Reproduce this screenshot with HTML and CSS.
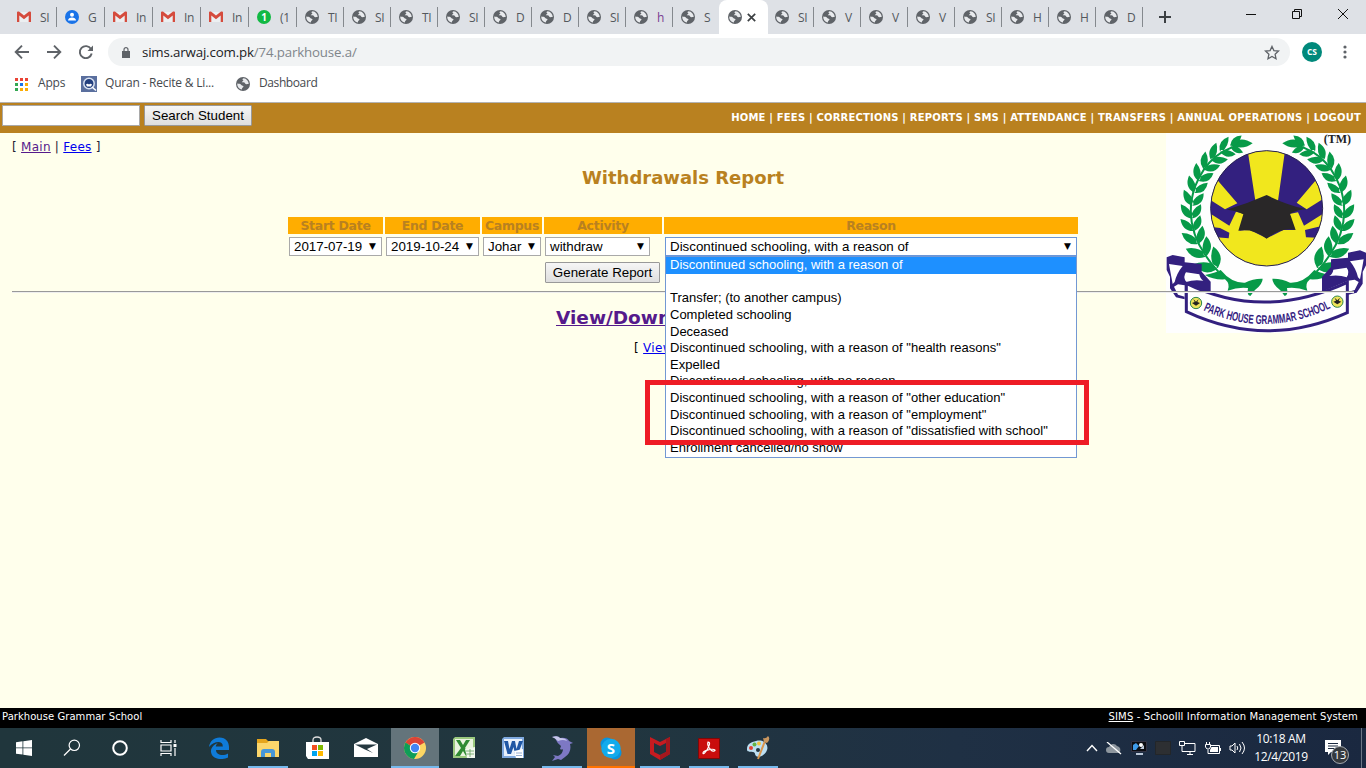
FILE: index.html
```html
<!DOCTYPE html>
<html lang="en">
<head>
<meta charset="utf-8">
<title>Withdrawals Report</title>
<link rel="stylesheet" href="styles.css">
</head>
<body>
<svg class="defs" width="0" height="0" aria-hidden="true">
  <symbol id="globe" viewBox="0 0 14 14"><circle cx="7" cy="7" r="7" fill="#5f6368"/><path d="M7.6 1.2c-1.6.5-1.2 1.7-.2 2 .2 1-1.6 1-1.6 2 1.300 0 2.900-.2 3.300 1.200.7 1.200 1.900.6 3.600.6a5.800 5.800 0 0 0-5.100-5.800zM1.300 6.500c1.500.2 3.400.3 4 1.500.7 1.200 2.300.5 2.200 1.700-.5.8-1.700 1-1.600 2.900C3 12 1 9.500 1.300 6.500z" fill="#e8eaed"/></symbol>
  <symbol id="gmail" viewBox="0 0 14 12"><path d="M1 1h12v10H1z" fill="#eceff1"/><path d="M0 1.500V11h2.300V4.500L7 8.300l4.700-3.800V11H14V1.500C14 .3 12.500.1 11.700.8L7 4.600 2.300.8C1.500.1 0 .3 0 1.500z" fill="#d54b3d"/></symbol>
  <symbol id="sprig" viewBox="-30 -30 60 50" overflow="visible"><path d="M-3 16Q-34 8-31-28Q-3-17 3 12ZM3 16Q34 8 29-25Q3-14-3 12Z" fill="#079a48"/></symbol>
</svg>

<div class="tabstrip">
  <div class="tab first"><svg class="fav gm"><use href="#gmail"/></svg><span>SI</span></div>
  <div class="tab w48"><svg class="fav" viewBox="0 0 14 14"><circle cx="7" cy="7" r="7" fill="#1a73e8"/><circle cx="7" cy="4.800" r="2" fill="#fff"/><path d="M3 10.500c0-4 8-4 8 0z" fill="#fff"/></svg><span>G</span></div>
  <div class="tab w48"><svg class="fav gm"><use href="#gmail"/></svg><span>In</span></div>
  <div class="tab w48"><svg class="fav gm"><use href="#gmail"/></svg><span>In</span></div>
  <div class="tab w48"><svg class="fav gm"><use href="#gmail"/></svg><span>In</span></div>
  <div class="tab w48"><i class="wa">1</i><span>(1</span></div>
  <div class="tab"><svg class="fav"><use href="#globe"/></svg><span>TI</span></div>
  <div class="tab"><svg class="fav"><use href="#globe"/></svg><span>SI</span></div>
  <div class="tab"><svg class="fav"><use href="#globe"/></svg><span>TI</span></div>
  <div class="tab"><svg class="fav"><use href="#globe"/></svg><span>SI</span></div>
  <div class="tab"><svg class="fav"><use href="#globe"/></svg><span>D</span></div>
  <div class="tab"><svg class="fav"><use href="#globe"/></svg><span>D</span></div>
  <div class="tab"><svg class="fav"><use href="#globe"/></svg><span>SI</span></div>
  <div class="tab"><svg class="fav"><use href="#globe"/></svg><span class="visited">h</span></div>
  <div class="tab nosep"><svg class="fav"><use href="#globe"/></svg><span>S</span></div>
  <div class="tab active"><svg class="fav"><use href="#globe"/></svg><svg class="close" viewBox="0 0 9 9"><path d="M.8.8l7.400 7.400M8.200.8L.8 8.200" stroke="#3c4043" stroke-width="1.700"/></svg></div>
  <div class="tab"><svg class="fav"><use href="#globe"/></svg><span>SI</span></div>
  <div class="tab"><svg class="fav"><use href="#globe"/></svg><span>V</span></div>
  <div class="tab"><svg class="fav"><use href="#globe"/></svg><span>V</span></div>
  <div class="tab"><svg class="fav"><use href="#globe"/></svg><span>V</span></div>
  <div class="tab"><svg class="fav"><use href="#globe"/></svg><span>SI</span></div>
  <div class="tab"><svg class="fav"><use href="#globe"/></svg><span>H</span></div>
  <div class="tab"><svg class="fav"><use href="#globe"/></svg><span>H</span></div>
  <div class="tab"><svg class="fav"><use href="#globe"/></svg><span>D</span></div>
  <svg class="newtab" viewBox="0 0 12 12"><path d="M6 0v12M0 6h12" stroke="#3c4043" stroke-width="2"/></svg>
  <svg class="winctl" width="105" height="14" viewBox="0 0 105 14" fill="none" stroke="#111"><path d="M0 7.500h10"/><path d="M46.500 4.500h7v7h-7zM48.500 4v-1.500h7v7H54"/><path d="M92 2l10 10M102 2L92 12"/></svg>
</div>

<div class="toolbar">
  <svg class="nav" width="94" height="20" viewBox="0 0 94 20" fill="none" stroke="#5f6368" stroke-width="1.900"><path d="M29 10H16M22 3.700L15.700 10l6.300 6.300"/><path d="M47 10h13M54 3.700l6.300 6.300-6.300 6.300"/><path d="M91 7A6 6 0 1 0 91.700 11.500"/><path d="M93 3.500v5.500h-5.500z" fill="#5f6368" stroke="none"/></svg>
  <div class="omnibox">
    <svg width="8" height="11" viewBox="0 0 8 11"><path d="M0 4h8v7H0z" fill="#5f6368"/><path d="M2 4.500V2.700a2 2 0 0 1 4 0v1.800" fill="none" stroke="#5f6368" stroke-width="1.200"/></svg>
    <span class="url">sims.arwaj.com.pk<em>/74.parkhouse.a/</em></span>
    <svg class="star" width="16" height="15" viewBox="0 0 16 15"><path d="M8 1.400l1.900 4.200 4.600.5-3.400 3.100.9 4.500L8 11.400l-4 2.300.9-4.500L1.500 6.100l4.600-.5z" fill="none" stroke="#5f6368" stroke-width="1.300"/></svg>
  </div>
  <b class="avatar">CS</b>
  <svg width="4" height="14" viewBox="0 0 4 14" fill="#5f6368"><circle cx="2" cy="2" r="1.600"/><circle cx="2" cy="7" r="1.600"/><circle cx="2" cy="12" r="1.600"/></svg>
</div>

<div class="bookmarks">
  <svg width="13" height="13" viewBox="0 0 13 13"><path d="M0 0h3v3H0zM5 0h3v3H5zM10 0h3v3h-3z" fill="#ea4335"/><path d="M0 5h3v3H0zM0 10h3v3H0z" fill="#34a853"/><path d="M5 5h3v3H5z" fill="#1a73e8"/><path d="M5 10h3v3H5zM10 10h3v3h-3z" fill="#fbac04"/><path d="M10 5h3v3h-3z" fill="#fbac04"/></svg>
  <span class="bm-apps">Apps</span>
  <svg width="16" height="16" viewBox="0 0 16 16"><path d="M0 0h16v16H0z" fill="#5a6f9e"/><circle cx="8" cy="7.500" r="5.200" fill="#24407e" stroke="#d9e2f1" stroke-width="1.500"/><path d="M5 8.500q1.500-1.500 3 0 1.500-1.500 3 0l-1 2H6z" fill="#fff"/><path d="M11 11l4 3.500" stroke="#fff" stroke-width="1.500"/></svg>
  <span class="bm-quran">Quran - Recite &amp; Li...</span>
  <svg class="fav"><use href="#globe"/></svg>
  <span class="bm-dash">Dashboard</span>
</div>

<header class="menu">
  <input type="text" class="search"><button class="btn search-btn">Search Student</button>
  <nav>HOME | FEES | CORRECTIONS | REPORTS | SMS | ATTENDANCE | TRANSFERS | ANNUAL OPERATIONS | LOGOUT</nav>
</header>

<main>
  <svg class="logo" viewBox="48 9 600 600">
    <defs><clipPath id="disc"><ellipse cx="350" cy="235" rx="168" ry="173"/></clipPath>
    <path id="motto" d="M160 541Q350 628 548 531"/>
    <g id="branch">
      <path d="M290 42Q180 55 135 170Q90 300 205 425" fill="none" stroke="#079a48" stroke-width="6"/>
      <path d="M308 40Q270 14 240 46Q280 62 308 40Z" fill="#079a48"/>
      <g>
        <use href="#sprig" x="-30" y="-30" width="60" height="50" transform="translate(255 46) rotate(82) scale(.85)"/>
        <use href="#sprig" x="-30" y="-30" width="60" height="50" transform="translate(224 58) rotate(65) scale(.95)"/>
        <use href="#sprig" x="-30" y="-30" width="60" height="50" transform="translate(196 80) rotate(52)"/>
        <use href="#sprig" x="-30" y="-30" width="60" height="50" transform="translate(172 106) rotate(40)"/>
        <use href="#sprig" x="-30" y="-30" width="60" height="50" transform="translate(153 138) rotate(28)"/>
        <use href="#sprig" x="-30" y="-30" width="60" height="50" transform="translate(138 173) rotate(18)"/>
        <use href="#sprig" x="-30" y="-30" width="60" height="50" transform="translate(129 211) rotate(7)"/>
        <use href="#sprig" x="-30" y="-30" width="60" height="50" transform="translate(125 249) rotate(-3)"/>
        <use href="#sprig" x="-30" y="-30" width="60" height="50" transform="translate(128 287) rotate(-13)"/>
        <use href="#sprig" x="-30" y="-30" width="60" height="50" transform="translate(138 325) rotate(-22) scale(1.100)"/>
        <use href="#sprig" x="-30" y="-30" width="60" height="50" transform="translate(157 363) rotate(-34) scale(1.200)"/>
        <use href="#sprig" x="-30" y="-30" width="60" height="50" transform="translate(186 401) rotate(-45) scale(1.350)"/>
      </g>
      <path d="M165 435Q200 428 212 420Q245 460 285 458Q310 445 338 446Q338 462 315 480L301 498Q290 495 294 474Q265 470 233 482Q242 462 225 448Q190 450 165 435Z" fill="#079a48"/>
    </g>
    <g id="fold">
      <path d="M50 382L68 375L104 382V397L155 402V425L182 455V499L104 466V508L78 502L60 475V440L50 420Z" fill="#33207f"/>
      <path d="M57 402L98 408Q80 430 74 456L68 462L62 430Z" fill="#fff"/>
      <path d="M108 427L148 433Q150 446 160 452Q130 448 108 456Q98 440 108 427ZM72 470L84 463L104 466V500L84 494Z" fill="#fff"/>
    </g></defs>
    <path d="M48 9h600v600H48z" fill="#fefefe"/>
    <use href="#branch"/><use href="#branch" transform="translate(705 0) scale(-1 1)"/>
    <use href="#fold"/><use href="#fold" transform="translate(698 -14) scale(-1 1)"/>
    <g clip-path="url(#disc)">
      <path d="M180 60h340v350H180z" fill="#33207f"/>
      <path d="M292 55H406L384 212H316ZM202 150L262 220L225 238L176 207ZM498 150L440 218L470 238L524 204Z" fill="#f1e71d"/>
      <path d="M184 253L238 287L258 245L284 252L268 302L300 300L350 325L400 300L435 300L418 252L444 247L462 287L518 252V287L465 300L468 322L520 324V415H180V320L236 325L238 308L210 294L180 290Z" fill="#f1e71d"/>
    </g>
    <ellipse cx="350" cy="235" rx="168" ry="173" fill="none" stroke="#282350" stroke-width="3"/>
    <path d="M230 239Q290 222 350 195Q410 225 470 238Q445 238 420 251L437 300Q395 290 350 326Q305 293 265 302L280 253Q255 240 230 239Z" fill="#292728"/>
    <path d="M109 460Q340 574 592 457V548Q350 658 109 545Z" fill="#fff" stroke="#33207f" stroke-width="9"/>
    <g stroke="#2c854c" stroke-width="3"><circle cx="138" cy="519" r="17" fill="#eee45b"/><circle cx="562" cy="515" r="17" fill="#eee45b"/></g>
    <path d="M130 507l4 9-8 3 12 8 12-8-8-3 4-9-8 8zM554 503l4 9-8 3 12 8 12-8-8-3 4-9-8 8z" fill="#222"/>
    <text class="motto"><textPath href="#motto" textLength="396" lengthAdjust="spacingAndGlyphs">PARK HOUSE GRAMMAR SCHOOL</textPath></text>
    <text class="tm" x="521" y="39" textLength="82" lengthAdjust="spacingAndGlyphs">(TM)</text>
  </svg>

  <div class="crumbs">[ <a class="seen">Main</a> | <a>Fees</a> ]</div>
  <h1>Withdrawals Report</h1>

  <div class="form">
    <b>Start Date</b><b>End Date</b><b>Campus</b><b>Activity</b><b>Reason</b>
    <div class="cell"><div class="select s93">2017-07-19<i>▼</i></div></div>
    <div class="cell"><div class="select s93">2019-10-24<i>▼</i></div></div>
    <div class="cell"><div class="select s58">Johar<i>▼</i></div></div>
    <div class="cell"><div class="select s105">withdraw<i>▼</i></div></div>
    <div class="cell"><div class="select open">Discontinued schooling, with a reason of<i>▼</i>
      <ul class="options">
        <li class="on">Discontinued schooling, with a reason of</li>
        <li>&nbsp;</li>
        <li>Transfer; (to another campus)</li>
        <li>Completed schooling</li>
        <li>Deceased</li>
        <li>Discontinued schooling, with a reason of "health reasons"</li>
        <li>Expelled</li>
        <li>Discontinued schooling, with no reason</li>
        <li>Discontinued schooling, with a reason of "other education"</li>
        <li>Discontinued schooling, with a reason of "employment"</li>
        <li>Discontinued schooling, with a reason of "dissatisfied with school"</li>
        <li>Enrollment cancelled/no show</li>
      </ul>
      <div class="highlight"></div>
    </div></div>
    <button class="btn generate">Generate Report</button>
  </div>
  <hr>
  <h2><a>View/Down</a></h2>
  <div class="viewlink">[ <a>View</a></div>
</main>

<footer><span>Parkhouse Grammar School</span><span class="sys"><u>SIMS</u> - Schoolll Information Management System</span></footer>

<div class="taskbar">
  <div class="task sys-task"><svg width="16" height="16" viewBox="0 0 16 16" fill="#fff"><path d="M0 2.200l6.500-.9v6.200H0zM7.300 1.200L16 0v7.500H7.300zM0 8.300h6.500v6.300L0 13.700zM7.300 8.300H16V16l-8.700-1.200z"/></svg></div>
  <div class="task sys-task"><svg width="18" height="18" viewBox="0 0 18 18" fill="none" stroke="#fff" stroke-width="1.200"><circle cx="11.300" cy="6.300" r="5.200"/><path d="M7.500 10L1 16.500"/></svg></div>
  <div class="task sys-task"><svg width="16" height="16" viewBox="0 0 16 16"><circle cx="8" cy="8" r="6.800" fill="none" stroke="#fff" stroke-width="2"/></svg></div>
  <div class="task sys-task"><svg width="17" height="16" viewBox="0 0 17 16" fill="none" stroke="#fff" stroke-width="1.200"><path d="M1 0v2.500h10V0M1 16v-2.500h10V16M1 5h10v6H1zM15 0v3M15 8v8"/><path d="M13.500 4h3v3h-3z" fill="#fff" stroke="none"/></svg></div>
  <div class="task gap"><svg width="22" height="22" viewBox="0 0 22 22"><path d="M1 10C2 4 6 .5 11.500.5 18 .5 21 5 21 10v3H8c0 5 7 6.500 12 3.500v4C14 23.500 4 22.500 3 15 2.500 10 7 7 10 6 8 7.500 7.800 9 7.800 9.500h7C15 3 6 4 1 10z" fill="#0f7bd9"/></svg></div>
  <div class="task run"><svg width="22" height="20" viewBox="0 0 22 20"><path d="M0 1h9l2 2h11v16H0z" fill="#e5a51c"/><path d="M0 5h10l2-2h10v16H0z" fill="#fbd66b"/><path d="M4 19v-5q0-3 3-3h8q3 0 3 3v5h-4v-4H8v4z" fill="#4797d8"/></svg></div>
  <div class="task"><svg width="24" height="24" viewBox="0 0 24 24"><path d="M8 7V4q0-3 4-3t4 3v3" fill="none" stroke="#ddd" stroke-width="1.300"/><path d="M1 6h23v17H3L1 20z" fill="#fff"/><path d="M7 9h5v5H7z" fill="#f25022"/><path d="M13 9h5v5h-5z" fill="#7fba00"/><path d="M7 15h5v5H7z" fill="#00a4ef"/><path d="M13 15h5v5h-5z" fill="#ffb900"/></svg></div>
  <div class="task"><svg width="24" height="20" viewBox="0 0 24 20"><path d="M0 6l12-6 12 6v13H0z" fill="#fff"/><path d="M1 6.500h22L13 11l6 4-8-3.500z" fill="#253840"/></svg></div>
  <div class="task run current"><svg width="22" height="22" viewBox="0 0 22 22"><circle cx="11" cy="11" r="11" fill="#fdd663"/><path d="M11 11L1.500 5.500A11 11 0 0 1 20.500 5.500z" fill="#db4437"/><path d="M20.500 5.500H11v5.500L1.500 5.500 6 3l5-3z" fill="#db4437"/><path d="M1.500 5.500A11 11 0 0 0 10 22l5-8.500-4-2z" fill="#0f9d58"/><circle cx="11" cy="11" r="5.200" fill="#fff"/><circle cx="11" cy="11" r="4.200" fill="#4285f4"/></svg></div>
  <div class="task"><svg width="22" height="22" viewBox="0 0 22 22"><path d="M2 0h20v21H0V2z" fill="#9bc97e"/><path d="M2 2h18v17H2z" fill="#e9f4df"/><path d="M3 3h4l3 5 3-5h4l-5 8 6 8h-5l-3-5-3 5H2l6-8z" fill="#2f8b32"/><path d="M12 12l10-2v11H14z" fill="#f2f8ee"/><path d="M13 14h8M13 17h8M17 12v8" stroke="#68a361" stroke-width=".8"/></svg></div>
  <div class="task"><svg width="22" height="22" viewBox="0 0 22 22"><path d="M2 0h20v21H0V2z" fill="#7fa9df"/><path d="M2 2h18v17H2z" fill="#e8f1fc"/><path d="M2 4h4l1.500 8L10 4h3l1.500 8L17 4h4l-5 13h-3l-1.500-7L9 17H5.500z" fill="#1f57a5"/><path d="M12 14l9-2v9h-7z" fill="#fff"/><path d="M14 16h6M14 18.500h6" stroke="#7c9bc8" stroke-width=".8"/></svg></div>
  <div class="task run"><svg width="22" height="25" viewBox="0 0 22 25"><path d="M1 1q6-2 8 1 7-1 9 3l4 2-3 1q2 8-5 13l-4 3-3-1-6 2 3-4-2-2 5 1q5-2 5-7-1 1-3 0l1-3q-4-3-5-6Q4 1 1 1z" fill="#7d78c4"/><path d="M1 1q6-2 8 1 6 0 7 3-4-2-9 0Q4 2 1 1z" fill="#c7c7ea"/></svg></div>
  <div class="task run skype"><svg width="22" height="23" viewBox="0 0 22 23"><circle cx="7" cy="7" r="6.500" fill="#0a93dc"/><circle cx="15" cy="16" r="6.500" fill="#0a93dc"/><circle cx="11" cy="11.500" r="9.700" fill="#12abec"/><text x="11" y="17" text-anchor="middle" class="skype-s">S</text></svg></div>
  <div class="task run"><svg width="22" height="24" viewBox="0 0 22 24"><path d="M1 1l10 5 10-5v17l-10 6-10-6z" fill="#c71b20"/><path d="M5 7l6 3 6-3v9l-6 3-6-3z" fill="#23343f"/><path d="M17 3l4-2v17l-10 6v-5l6-3z" fill="#a6171d"/></svg></div>
  <div class="task run"><svg width="22" height="21" viewBox="0 0 22 21"><path d="M.5.500h21v20H.5z" fill="#c90d0d" stroke="#7f0808"/><path d="M10 4c3 0 1 4-.5 7S5 17 5 15s8-4.500 11-3.500-1 2.500-3 .5-4-5-3-8z" fill="none" stroke="#fff" stroke-width="1.200"/></svg></div>
  <div class="task run"><svg width="24" height="24" viewBox="0 0 24 24"><path d="M10 5c8-2 13 4 11 9-2 6-9 8-11 6-2-3 0-3-3-4s-6 1-6-3c0-5 4-7 9-8z" fill="#bcdff2"/><circle cx="5" cy="12" r="2" fill="#e34234"/><circle cx="8.500" cy="8.500" r="2" fill="#64b346"/><circle cx="13" cy="7.500" r="2" fill="#f4c23c"/><circle cx="12" cy="14" r="2" fill="#21343f"/><path d="M12 23l7-18" stroke="#d8954d" stroke-width="2"/><path d="M18 6l-1-4q3 1 5-2 3 3-1 7z" fill="#c8965f"/></svg></div>
  <div class="tray">
    <svg width="12" height="8" viewBox="0 0 12 8"><path d="M1 7l5-5.500L11 7" fill="none" stroke="#fff" stroke-width="1.400"/></svg>
    <svg width="16" height="13" viewBox="0 0 16 13"><path d="M3 11a3 3 0 0 1 0-6 4.500 4.500 0 0 1 8-1 4 4 0 0 1 2 7z" fill="#8d969e"/><path d="M1 0l14 12" stroke="#fff" stroke-width="1.300"/></svg>
    <svg width="16" height="15" viewBox="0 0 16 15"><path d="M.5.500h15v10H.5z" fill="#0b0d12" stroke="#334"/><path d="M2 4l3-2 3 3-3 4H2z" fill="#3e9ae8"/><circle cx="10" cy="4" r="2" fill="#fff"/><path d="M9 8h4V4M5 12h7v2H5z" fill="#bbc8d9"/></svg>
    <svg width="16" height="15" viewBox="0 0 16 15"><path d="M.5.500h15v13H.5z" fill="#2d2f32" stroke="#232629"/></svg>
    <svg width="17" height="14" viewBox="0 0 17 14" fill="none" stroke="#fff"><path d="M6 2.500h10v8H5M8 13.500h6M11 10.500v3M.5 .500h5v4h-5zM3 5v5.500h2"/></svg>
    <svg width="16" height="13" viewBox="0 0 16 13" fill="none" stroke="#fff"><path d="M6 3.500h8.500v8H3V8M15.500 6v3M1.500 0v2M4.500 0v2M.5 2.500h5v2.500l-1.500 2H2L.5 5z"/><path d="M6.500 5h6.500v5H5V8z" fill="#fff" stroke="none"/></svg>
    <svg width="17" height="14" viewBox="0 0 17 14" fill="none" stroke="#fff"><path d="M1 5h2l3-3v10L3 9H1zM8 5q1.500 2 0 4M10.500 3q3 4 0 8M13 1q5 6 0 12"/></svg>
  </div>
  <div class="clock"><span>10:18 AM</span><span>12/4/2019</span></div>
  <div class="notice"><svg width="16" height="16" viewBox="0 0 16 16"><path d="M0 0h16v12H6l-3 3v-3H0z" fill="#fff"/><path d="M3 3.500h10M3 6h10M3 8.500h7" stroke="#1c2a40"/></svg><i>13</i></div>
</div>
</body>
</html>
```
FILE: styles.css
```css
* { box-sizing: border-box; }
body { margin: 0; width: 1366px; height: 768px; overflow: hidden; display: flex; flex-direction: column; background: #ffffec; font-family: "DejaVu Sans", sans-serif; color: #000; }
svg { display: block; flex: none; }
.defs { position: absolute; }

.tabstrip { height: 34px; flex: none; background: #dee1e6; display: flex; font: 12px "Open Sans", sans-serif; color: #54585d; }
.tab { width: 47px; height: 34px; flex: none; display: flex; align-items: center; padding-left: 8px; gap: 9px; background: linear-gradient(#85898e, #85898e) right 7px / 1px 20px no-repeat; background-position: right 0 top 7px; }
.tab.first { width: 57px; padding-left: 17px; }
.tab.w48 { width: 48px; }
.tab.nosep { background: none; }
.tab span { width: 12px; white-space: nowrap; font-size: 12px; letter-spacing: -.3px; }
.tab .visited { color: #7a3e92; }
.fav { width: 14px; height: 14px; }
.gm { width: 14px; height: 12px; }
.tab.active { width: 49px; margin: 0 -1px; padding-left: 9px; background: #fff; border-radius: 8px 8px 0 0; gap: 5px; }
.close { width: 9px; height: 9px; }
.wa { width: 14px; height: 14px; border-radius: 50%; background: #12b944; color: #fff; font: bold 10px/14px "Open Sans", sans-serif; text-align: center; }
.newtab { width: 12px; height: 12px; margin: 11px 0 0 16px; }
.winctl { margin: 7px 0 0 75px; }

.toolbar { height: 36px; flex: none; background: #fff; display: flex; align-items: center; }
.nav { margin-right: 14px; }
.omnibox { width: 1182px; height: 28px; border-radius: 14px; background: #f1f3f4; display: flex; align-items: center; padding: 0 10px 0 14px; }
.url { margin-left: 12px; font: 13.3px "Open Sans", sans-serif; color: #202124; flex: 1; letter-spacing: -.16px; }
.url em { font-style: normal; color: #80868b; }
.avatar { width: 20px; height: 20px; border-radius: 50%; background: #00897b; color: #fff; font: bold 8.500px/20px "Open Sans", sans-serif; text-align: center; margin: 0 21px 0 12px; }
.bookmarks { height: 33px; flex: none; background: #fff; border-bottom: 1px solid #b3b3b3; display: flex; align-items: center; padding: 0 0 4px 15px; font: 12px/16px "Open Sans", sans-serif; color: #45494e; letter-spacing: -.2px; }
.bookmarks span { white-space: nowrap; margin-top: -2px; }
.bm-apps { width: 43px; margin-left: 10px; }
.bm-quran { width: 131px; margin-left: 8px; }
.bm-dash { margin-left: 9px; letter-spacing: -.4px; }

.menu { height: 30px; flex: none; background: #b98120; display: flex; padding: 2px 5px 0 2px; }
.search { width: 138px; height: 21px; border: 1px solid #a9a9a9; background: #fff; padding: 0; }
.btn { height: 21px; padding: 0; border: 1px solid #999; border-radius: 1px; background: linear-gradient(#f6f6f6, #dedede); font: 13.333px/17px "Liberation Sans", sans-serif; color: #000; }
.search-btn { width: 108px; margin-left: 4px; }
.menu nav { margin-left: auto; color: #fff; font: bold 10px/26px "DejaVu Sans", sans-serif; letter-spacing: .195px; white-space: nowrap; }

main { position: relative; flex: 1; padding: 6px 12px 0; }
.logo { position: absolute; right: 0; top: 0; width: 200px; height: 200px; }
.motto { font: bold 38px "Liberation Sans", sans-serif; fill: #33207f; }
.tm { font: bold 39px "Liberation Serif", serif; fill: #222; }
.crumbs { font-size: 12px; line-height: 16px; color: #223; letter-spacing: .27px; }
a { color: #00e; text-decoration: underline; }
a.seen, h2 a { color: #551a8b; }
h1 { margin: 11px 0 0; font-size: 18px; line-height: 24px; text-align: center; color: #b98120; }
.form { position: relative; width: 790px; margin: 27px 0 0 276px; display: grid; grid-template-columns: 95px 95px 60px 118px 414px; grid-template-rows: 17px 21px 22px; column-gap: 2px; row-gap: 2px; }
.form b { background: #ffad00; color: #b98120; font-size: 12.500px; line-height: 17px; text-align: center; letter-spacing: -.3px; }
.cell { padding: 1px; }
.select { position: relative; height: 19px; border: 1px solid #a9a9a9; background: #fff; padding-left: 4px; font: 13.333px/17px "Liberation Sans", sans-serif; white-space: nowrap; }
.select i { position: absolute; right: 5px; top: 0; font: 9px/17px "DejaVu Sans", sans-serif; }
.s93 { width: 93px; }
.s58 { width: 58px; }
.s105 { width: 105px; }
.open { width: 412px; border-color: #6b96d8; }
.options { position: absolute; z-index: 2; left: -1px; top: 18px; width: 412px; height: 202px; margin: 0; padding: 0; list-style: none; background: #fff; border: 1px solid #7398d3; font-size: 13px; }
.options li { height: 16.640px; line-height: 16.500px; padding-left: 4px; }
.options .on { background: #1e90ff; color: #fff; }
.highlight { position: absolute; z-index: 3; left: -21px; top: 142px; width: 444px; height: 65px; border: 5px solid #ee1c25; }
.generate { grid-column: 4; width: 115px; margin: 3px 0 0 1px; height: 21px; }
hr { position: relative; margin: 10px 0 0; border: 0; height: 2px; border-top: 1px solid #999; background: #eee; }
h2 { margin: 13px 0 0 544px; font-size: 18.500px; line-height: 24px; }
.viewlink { margin: 10px 0 0 622px; font-size: 12px; line-height: 16px; letter-spacing: .3px; }

footer { height: 20px; flex: none; background: #000; color: #fff; display: flex; justify-content: space-between; padding: 0 8px 0 2px; font-size: 10px; line-height: 17px; letter-spacing: .05px; }
.sys { letter-spacing: .13px; }
.taskbar { height: 40px; flex: none; background: linear-gradient(90deg, #20363c, #21363f 45%, #1f3044 70%, #1a2840); display: flex; }
.task { width: 48px; height: 40px; margin-right: 1px; flex: none; display: flex; align-items: center; justify-content: center; }
.sys-task { margin-right: 0; }
.gap { margin-left: 3px; }
.run { background: linear-gradient(#76b9ed, #76b9ed) center bottom / 40px 2px no-repeat; }
.current { background: linear-gradient(#76b9ed, #76b9ed) center bottom / 48px 2px no-repeat, #64747b; }
.skype { background: linear-gradient(#ff7200, #ff7200) center bottom / 48px 2px no-repeat, #aa6832; }
.skype-s { font: bold 15px "Open Sans", sans-serif; fill: #fff; }
.tray { width: 160px; margin-left: 303px; display: flex; align-items: center; justify-content: space-between; }
.clock { width: 70px; display: flex; flex-direction: column; align-items: center; margin-left: 0; padding-top: 2px; font: 12px/18px "Open Sans", sans-serif; color: #fff; letter-spacing: -.35px; }
.notice { position: relative; width: 46px; border-right: 1px solid #6b7686; padding: 12px 0 0 9px; }
.notice i { position: absolute; left: 15px; top: 18px; width: 18px; height: 18px; border: 1px solid #a3a8ad; border-radius: 50%; background: #35393d; color: #fff; font: 11px/16px "Open Sans", sans-serif; text-align: center; }
```
